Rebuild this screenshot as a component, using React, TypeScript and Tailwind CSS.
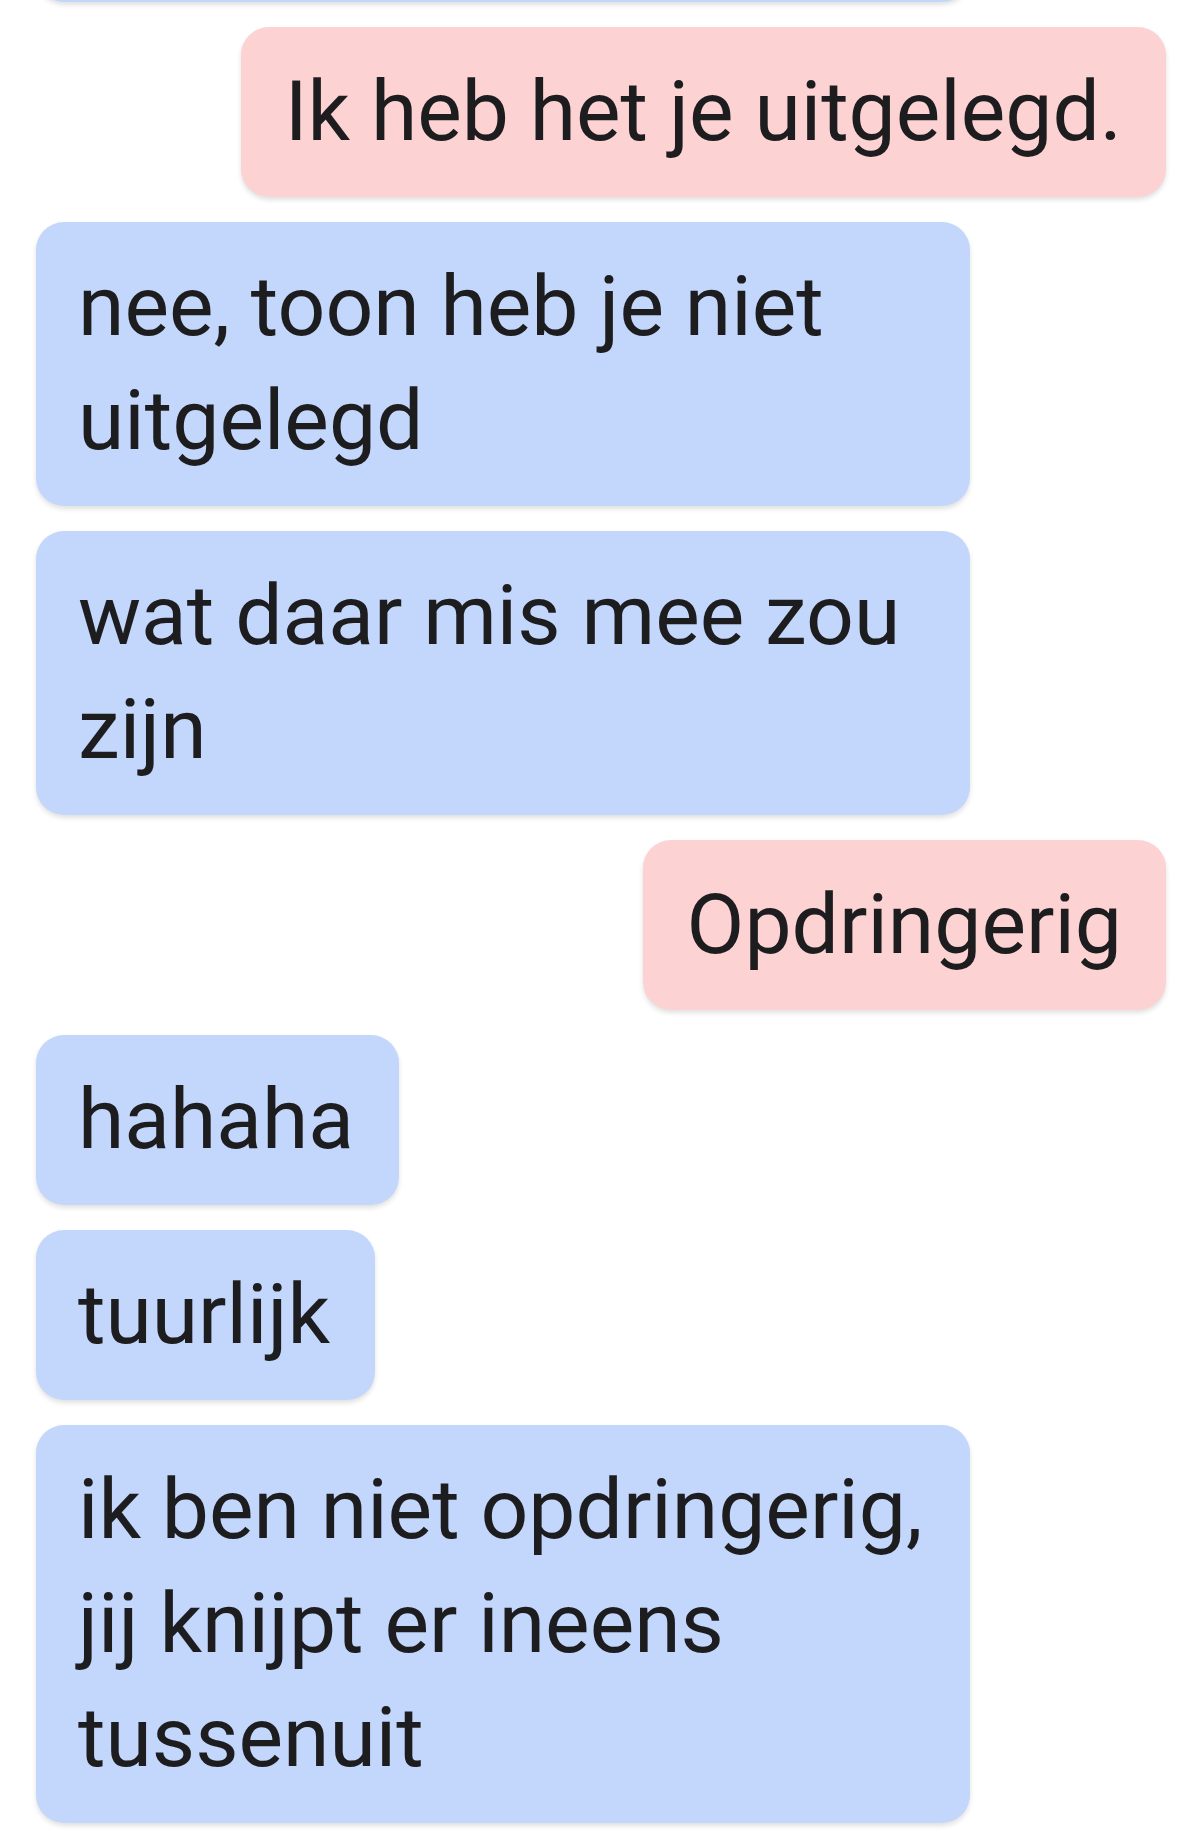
import React from 'react';

type Msg = { id: number; from: 'me' | 'them'; lines: string[] };

// line breaks follow the screenshot
const messages: Msg[] = [
  { id: 1, from: 'me', lines: ['Ik heb het je uitgelegd.'] },
  { id: 2, from: 'them', lines: ['nee, toon heb je niet', 'uitgelegd'] },
  { id: 3, from: 'them', lines: ['wat daar mis mee zou', 'zijn'] },
  { id: 4, from: 'me', lines: ['Opdringerig'] },
  { id: 5, from: 'them', lines: ['hahaha'] },
  { id: 6, from: 'them', lines: ['tuurlijk'] },
  { id: 7, from: 'them', lines: ['ik ben niet opdringerig,', 'jij knijpt er ineens', 'tussenuit'] },
];

const Bubble = ({ msg }: { msg: Msg }) => {
  const mine = msg.from === 'me';
  const wide = !mine && msg.lines.length > 1;
  return (
    <div className={mine ? 'flex justify-end' : 'flex justify-start'}>
      <div
        className={
          mine
            ? 'rounded-[28px] bg-[#fdd2d2] px-[44px] py-[28px] shadow-[0_3px_5px_rgba(0,0,0,0.12)]'
            : wide
              ? 'w-[934px] rounded-[28px] bg-[#c3d6fb] pl-[42px] pr-[30px] py-[28px] shadow-[0_3px_5px_rgba(0,0,0,0.12)]'
              : 'rounded-[28px] bg-[#c3d6fb] pl-[42px] pr-[45px] py-[28px] shadow-[0_3px_5px_rgba(0,0,0,0.12)]'
        }
      >
        {msg.lines.map((l, i) => (
          <p key={i} className="whitespace-nowrap text-[84px] leading-[114px] text-[#1d1d1f]">
            {l}
          </p>
        ))}
      </div>
    </div>
  );
};

export default function App() {
  return (
    <div
      className="min-h-[1836px] w-[1200px] overflow-hidden bg-white pl-[36px] pr-[34px]"
      style={{ fontFamily: 'Roboto, "Noto Sans", sans-serif' }}
    >
      <div className="flex flex-col gap-[25px]">
        {/* tail of the previous bubble, cut off at the top */}
        <div className="-mt-[98px] h-[100px] w-[934px] rounded-[28px] bg-[#c3d6fb] shadow-[0_3px_5px_rgba(0,0,0,0.12)]" />
        {messages.map((m) => (
          <Bubble key={m.id} msg={m} />
        ))}
      </div>
    </div>
  );
}
